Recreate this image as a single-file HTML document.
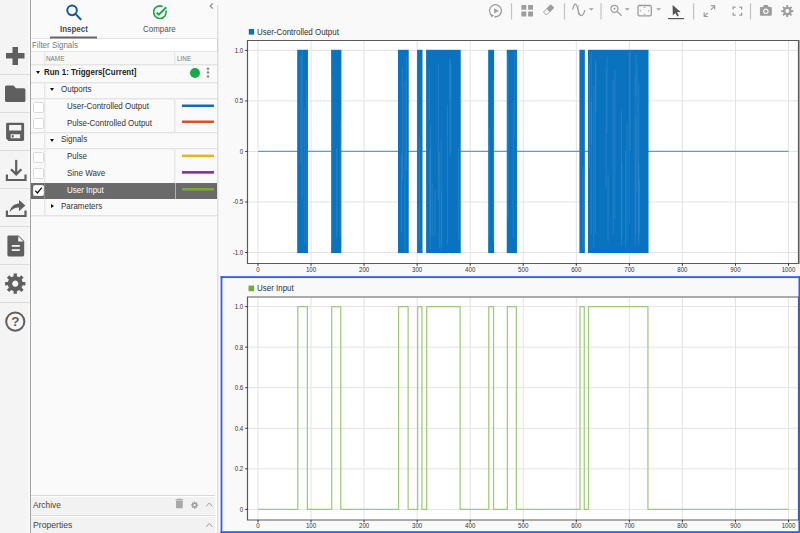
<!DOCTYPE html>
<html><head><meta charset="utf-8">
<style>
*{margin:0;padding:0;box-sizing:border-box}
html,body{width:800px;height:533px;overflow:hidden;background:#f9f9f9;font-family:"Liberation Sans",sans-serif;color:#333}
.a{position:absolute}
.t{position:absolute;white-space:nowrap;font-size:9px;line-height:9px;transform-origin:0 0;transform:scaleX(.885)}
#side{left:0;top:0;width:30px;height:533px;background:#f4f4f4;border-right:1px solid #a3a3a3;box-sizing:content-box}
.sep{left:0;width:30px;height:1px;background:#dcdcdc}
#panel{left:31px;top:0;width:187px;height:533px;background:#fafafa}
#pbr{left:217px;top:5px;width:2px;height:528px;background:#e0e0e0}
.hl{position:absolute;left:31px;width:186px;height:1px;background:#e4e4e4;box-shadow:0 1px 0 #f0f0f0}
.vl{position:absolute;width:1px;background:#e8e8e8;box-shadow:1px 0 0 #f1f1f1}
.cb{position:absolute;left:32.5px;width:11px;height:11px;background:#fff;border:1px solid #dadada;border-radius:1.5px}
.ln{position:absolute;left:182px;width:32px;height:2.4px}
.tri{position:absolute;width:0;height:0;border-left:2.5px solid transparent;border-right:2.5px solid transparent;border-top:3.5px solid #111}
</style></head><body>

<!-- left sidebar -->
<div id="side" class="a"></div><div class="a" style="left:28px;top:0;width:1.5px;height:533px;background:#f8f8f8"></div><div class="a" style="left:31px;top:0;width:1px;height:533px;background:#fff"></div>
<div class="a sep" style="top:74px"></div>
<div class="a sep" style="top:112px"></div>
<div class="a sep" style="top:150px"></div>
<div class="a sep" style="top:188px"></div>
<div class="a sep" style="top:226px"></div>
<div class="a sep" style="top:264px"></div>
<div class="a sep" style="top:302px"></div>
<svg class="a" style="left:0;top:0" width="30" height="340" viewBox="0 0 30 340">
  <g fill="#5f5f5f">
    <rect x="12.5" y="47" width="5.5" height="18"/>
    <rect x="6" y="53" width="18.5" height="5.5"/>
    <path d="M6.5 85.5 H13.5 L16 88.3 H24 Q25.4 88.3 25.4 89.8 V100.5 Q25.4 102 24 102 H6.5 Q5 102 5 100.5 V87 Q5 85.5 6.5 85.5 Z"/>
    <path d="M7.5 122.7 H22.7 Q24.1 122.7 24.1 124.1 V139.6 Q24.1 141 22.7 141 H8.5 L6.1 138.6 V124.1 Q6.1 122.7 7.5 122.7 Z M9.1 125.1 V130.6 H21.3 V125.1 Z M10.7 134.3 V138.3 H20.1 V134.3 Z"/>
    <rect x="11.7" y="135.2" width="2" height="2.2"/>
    <path d="M7.5 235.4 H18.5 L24.2 241 V255 Q24.2 256.4 22.8 256.4 H8.8 Q7.4 256.4 7.4 255 V236.8 Q7.4 235.4 8.8 235.4 Z"/>
  </g>
  <g fill="#f3f3f3">
    <path d="M18.2 236.2 L23.6 241.6 H18.2 Z"/>
    <rect x="11.8" y="245" width="8" height="1.8"/>
    <rect x="11.8" y="249.2" width="8" height="1.8"/>
  </g>
  <g fill="none" stroke="#5f5f5f" stroke-width="2.2">
    <path d="M6.9 174.6 V180 H25.5 V174.6"/>
    <path d="M16.2 159.9 V174.5"/>
    <path d="M11 169.2 L16.2 174.4 L21.4 169.2"/>
    <path d="M6.9 210.6 V216 H25.5 V210.6"/>
    <circle cx="15.25" cy="321.6" r="9.1" stroke-width="2"/>
  </g>
  <path fill="#5f5f5f" d="M9.6 212.3 C10.5 206.5 14.5 203.8 19 203.6 V200 L25.4 205.6 L19 211.2 V207.5 C14.8 207.6 11.8 209.2 9.6 212.3 Z"/>
  <text x="15.25" y="326.2" font-family="Liberation Sans" font-size="13.5" font-weight="bold" fill="#5f5f5f" text-anchor="middle">?</text>
  <path fill="#5f5f5f" fill-rule="evenodd" d="M13.65 276.27 L13.56 273.54 L16.94 273.54 L16.85 276.27 L19.37 277.32 L21.24 275.32 L23.63 277.71 L21.63 279.58 L22.68 282.10 L25.41 282.01 L25.41 285.39 L22.68 285.30 L21.63 287.82 L23.63 289.69 L21.24 292.08 L19.37 290.08 L16.85 291.13 L16.94 293.86 L13.56 293.86 L13.65 291.13 L11.13 290.08 L9.26 292.08 L6.87 289.69 L8.87 287.82 L7.82 285.30 L5.09 285.39 L5.09 282.01 L7.82 282.10 L8.87 279.58 L6.87 277.71 L9.26 275.32 L11.13 277.32 Z M15.25 280.60 A3.1 3.1 0 1 0 15.26 280.60 Z"/>
</svg>

<!-- panel -->
<div id="panel" class="a"></div><div id="pbr" class="a"></div>
<div class="hl" style="top:38px;background:#e2e2e2"></div>
<div class="a" style="left:31px;top:39px;width:186px;height:12px;background:#fff"></div>
<div class="a" style="left:31px;top:51px;width:186px;height:14px;background:#f8f8f8"></div>
<div class="hl" style="top:51px;background:#e6e6e6;box-shadow:none"></div>
<div class="a" style="left:216.5px;top:39px;width:1.5px;height:13px;background:#cfcfcf"></div>
<div class="hl" style="top:64px"></div>
<div class="hl" style="top:82px"></div>
<div class="hl" style="top:98px"></div>
<div class="hl" style="top:132px"></div>
<div class="hl" style="top:148px"></div>
<div class="hl" style="top:215px"></div>
<div class="vl" style="left:44px;top:51px;height:13px"></div>
<div class="vl" style="left:174px;top:51px;height:13px"></div>
<div class="vl" style="left:44px;top:83px;height:132px"></div>
<div class="vl" style="left:174px;top:99px;height:33px"></div>
<div class="vl" style="left:174px;top:149px;height:50px"></div>

<!-- selected row -->
<div class="a" style="left:31px;top:183px;width:186px;height:16px;background:#6a6a6a"></div>
<div class="a" style="left:44px;top:183px;width:1px;height:16px;background:#8a8a8a"></div>
<div class="a" style="left:174.5px;top:183px;width:1.5px;height:16px;background:#b0b0b0"></div>

<div class="cb" style="top:101.8px"></div>
<div class="cb" style="top:118.2px"></div>
<div class="cb" style="top:151.6px"></div>
<div class="cb" style="top:168px"></div>
<div class="cb" style="top:184.8px;border-color:#e8e8e8"></div>

<svg class="a" style="left:180px;top:100px" width="36" height="95" viewBox="180 100 36 95">
<rect x="182" y="104.5" width="32" height="2.5" fill="#0a6ebd"/>
<rect x="182" y="120.5" width="32" height="2.5" fill="#d95319"/>
<rect x="182" y="154.6" width="32" height="2.5" fill="#edb120"/>
<rect x="182" y="171.1" width="32" height="2.5" fill="#7e2f8e"/>
<rect x="182" y="188" width="32" height="2.5" fill="#77ac30"/>
</svg>


<!-- tabs -->
<svg class="a" style="left:31px;top:0" width="187" height="40" viewBox="31 0 187 40">
  <g fill="none" stroke="#0e5a96" stroke-width="2" transform="translate(0.4 0.6)">
    <circle cx="71.65" cy="9.75" r="4.8"/>
    <path d="M75.1 13.3 L80.2 18.6" stroke-linecap="round"/>
  </g>
  <g fill="none" stroke="#15a84a" stroke-width="1.6">
    <path d="M165.99 10.57 A6.3 6.3 0 1 1 162.56 6.49"/>
    <path d="M156.6 12.5 L158.8 14.6 L166.3 7.3" stroke-width="1.9"/>
  </g>
  <path d="M212.8 3.4 L210.2 6 L212.8 8.6" fill="none" stroke="#8f8f8f" stroke-width="1.3"/>
  <rect x="50" y="36.5" width="47" height="2" fill="#666"/>
</svg>
<div class="t" style="left:59.5px;top:25px;font-weight:bold;color:#4a4a4a">Inspect</div>
<div class="t" style="left:143.3px;top:25px;color:#555">Compare</div>
<div class="t" style="left:31.5px;top:40.5px;color:#777">Filter Signals</div>
<div class="t" style="left:46px;top:53.6px;font-size:7.2px;color:#777">NAME</div>
<div class="t" style="left:176.8px;top:53.6px;font-size:7.2px;color:#777">LINE</div>

<div class="tri" style="left:36px;top:71px"></div>
<div class="t" style="left:43.5px;top:67.5px;font-weight:bold;color:#222">Run 1: Triggers[Current]</div>
<div class="a" style="left:190.3px;top:67.8px;width:10px;height:10px;border-radius:50%;background:#17a84a"></div>
<svg class="a" style="left:204px;top:64px" width="8" height="16" viewBox="204 64 8 16"><g fill="#8a8a8a"><circle cx="208" cy="68.7" r="1.25"/><circle cx="208" cy="72.6" r="1.25"/><circle cx="208" cy="76.6" r="1.25"/></g></svg>

<div class="tri" style="left:50px;top:88px"></div>
<div class="t" style="left:60.75px;top:84.5px;color:#333">Outports</div>
<div class="t" style="left:66.75px;top:101.5px;color:#333">User-Controlled Output</div>
<div class="t" style="left:66.75px;top:119px;color:#333">Pulse-Controlled Output</div>
<div class="tri" style="left:50px;top:139px"></div>
<div class="t" style="left:60.75px;top:135px;color:#333">Signals</div>
<div class="t" style="left:66.75px;top:152px;color:#333">Pulse</div>
<div class="t" style="left:66.75px;top:168.5px;color:#333">Sine Wave</div>
<div class="t" style="left:66.75px;top:185.5px;color:#fff">User Input</div>
<div class="a" style="left:51px;top:204px;width:0;height:0;border-top:2.8px solid transparent;border-bottom:2.8px solid transparent;border-left:3.8px solid #111"></div>
<div class="t" style="left:60.75px;top:202px;color:#333">Parameters</div>
<svg class="a" style="left:33px;top:185px" width="11" height="11" viewBox="0 0 11 11"><path d="M2.3 5.6 L4.4 7.9 L8.8 2.6" fill="none" stroke="#111" stroke-width="1.3"/></svg>

<!-- archive / properties -->
<div class="a" style="left:31px;top:495.5px;width:184px;height:19px;background:#f2f2f2"></div>
<div class="a" style="left:31px;top:515.5px;width:184px;height:18px;background:#f2f2f2"></div>
<div class="hl" style="top:495px;background:#d9d9d9;width:184px;box-shadow:0 1px 0 #fff"></div>
<div class="hl" style="top:515px;background:#d9d9d9;width:184px;box-shadow:0 1px 0 #fff,0 -1px 0 #f7f7f7"></div>
<div class="t" style="left:33px;top:501px;color:#444;transform:scaleX(.93)">Archive</div>
<div class="t" style="left:33px;top:521px;color:#444;transform:scaleX(.96)">Properties</div>
<svg class="a" style="left:170px;top:495px" width="48" height="38" viewBox="170 495 48 38">
  <g fill="#a8a8a8">
    <rect x="176" y="500.6" width="6.8" height="7.6" rx="0.8"/>
    <rect x="175.6" y="499.2" width="7.6" height="1" />
    <rect x="177.8" y="498.6" width="3.2" height="1"/>
  </g>
  <path fill="#9a9a9a" fill-rule="evenodd" d="M194.04 502.56 L193.97 501.56 L195.23 501.56 L195.16 502.56 L196.00 502.91 L196.66 502.15 L197.55 503.04 L196.79 503.70 L197.14 504.54 L198.14 504.47 L198.14 505.73 L197.14 505.66 L196.79 506.50 L197.55 507.16 L196.66 508.05 L196.00 507.29 L195.16 507.64 L195.23 508.64 L193.97 508.64 L194.04 507.64 L193.20 507.29 L192.54 508.05 L191.65 507.16 L192.41 506.50 L192.06 505.66 L191.06 505.73 L191.06 504.47 L192.06 504.54 L192.41 503.70 L191.65 503.04 L192.54 502.15 L193.20 502.91 Z M194.60 503.90 A1.2 1.2 0 1 0 194.61 503.90 Z"/>
  <g fill="none" stroke="#9a9a9a" stroke-width="1">
    <path d="M206.2 506.3 L209.3 503 L212.4 506.3"/>
    <path d="M206.2 526.8 L209.3 523.5 L212.4 526.8"/>
  </g>
</svg>
<!-- PLOT -->
<svg class="a" style="left:218px;top:0" width="582" height="533" viewBox="218 0 582 533" font-family="Liberation Sans">
<rect x="218.5" y="0" width="582" height="533" fill="#f9f9f9"/>
<rect x="247.5" y="40.5" width="551" height="222.5" fill="#fff"/>
<rect x="247.5" y="297" width="551" height="223" fill="#fff"/>
<path d="M258.00 41V263 M258.00 297.5V520 M311.05 41V263 M311.05 297.5V520 M364.10 41V263 M364.10 297.5V520 M417.15 41V263 M417.15 297.5V520 M470.20 41V263 M470.20 297.5V520 M523.25 41V263 M523.25 297.5V520 M576.30 41V263 M576.30 297.5V520 M629.35 41V263 M629.35 297.5V520 M682.40 41V263 M682.40 297.5V520 M735.45 41V263 M735.45 297.5V520 M788.50 41V263 M788.50 297.5V520 M248 50.40H798 M248 100.92H798 M248 151.45H798 M248 201.97H798 M248 252.50H798 M248 306.60H798 M248 347.16H798 M248 387.72H798 M248 428.28H798 M248 468.84H798 M248 509.40H798" stroke="#e3e3e3" stroke-width="1" fill="none"/>
<path d="M258.00 151.45H788.50" stroke="#5e9bd0" stroke-width="1.3" fill="none"/>
<rect x="297.19" y="49.80" width="10.75" height="203.30" fill="#0a73c0"/>
<path d="M302.09 51.23V198.70" stroke="#4a95d3" stroke-width="0.7" opacity="0.55"/>
<path d="M304.22 108.86V243.05" stroke="#4a95d3" stroke-width="0.7" opacity="0.55"/>
<path d="M306.21 79.96V245.59" stroke="#4a95d3" stroke-width="0.7" opacity="0.55"/>
<path d="M300.81 55.42V164.94" stroke="#4a95d3" stroke-width="0.7" opacity="0.55"/>
<rect x="331.14" y="49.80" width="10.22" height="203.30" fill="#0a73c0"/>
<path d="M331.75 76.96V241.72" stroke="#4a95d3" stroke-width="0.7" opacity="0.55"/>
<path d="M340.22 120.92V237.52" stroke="#4a95d3" stroke-width="0.7" opacity="0.55"/>
<path d="M336.48 148.35V237.32" stroke="#4a95d3" stroke-width="0.7" opacity="0.55"/>
<rect x="397.98" y="49.80" width="10.75" height="203.30" fill="#0a73c0"/>
<path d="M406.31 56.68V169.89" stroke="#4a95d3" stroke-width="0.7" opacity="0.55"/>
<path d="M401.58 153.29V232.55" stroke="#4a95d3" stroke-width="0.7" opacity="0.55"/>
<path d="M404.92 81.87V251.61" stroke="#4a95d3" stroke-width="0.7" opacity="0.55"/>
<path d="M402.47 67.38V180.43" stroke="#4a95d3" stroke-width="0.7" opacity="0.55"/>
<rect x="417.08" y="49.80" width="5.44" height="203.30" fill="#0a73c0"/>
<path d="M419.37 138.37V242.63" stroke="#4a95d3" stroke-width="0.7" opacity="0.55"/>
<rect x="426.10" y="49.80" width="34.62" height="203.30" fill="#0a73c0"/>
<path d="M450.05 58.41V157.19" stroke="#4a95d3" stroke-width="0.7" opacity="0.55"/>
<path d="M447.49 105.17V244.13" stroke="#4a95d3" stroke-width="0.7" opacity="0.55"/>
<path d="M439.26 151.37V248.62" stroke="#4a95d3" stroke-width="0.7" opacity="0.55"/>
<path d="M432.21 183.19V235.94" stroke="#4a95d3" stroke-width="0.7" opacity="0.55"/>
<path d="M449.95 59.55V99.64" stroke="#4a95d3" stroke-width="0.7" opacity="0.55"/>
<path d="M441.20 140.05V250.99" stroke="#4a95d3" stroke-width="0.7" opacity="0.55"/>
<path d="M438.29 63.97V199.36" stroke="#4a95d3" stroke-width="0.7" opacity="0.55"/>
<path d="M434.97 190.18V235.40" stroke="#4a95d3" stroke-width="0.7" opacity="0.55"/>
<path d="M429.21 68.13V120.30" stroke="#4a95d3" stroke-width="0.7" opacity="0.55"/>
<path d="M450.88 63.95V151.40" stroke="#4a95d3" stroke-width="0.7" opacity="0.55"/>
<path d="M430.50 123.54V237.11" stroke="#4a95d3" stroke-width="0.7" opacity="0.55"/>
<path d="M458.39 147.32V239.02" stroke="#4a95d3" stroke-width="0.7" opacity="0.55"/>
<path d="M430.09 148.48V249.31" stroke="#4a95d3" stroke-width="0.7" opacity="0.55"/>
<path d="M441.62 191.02V244.87" stroke="#4a95d3" stroke-width="0.7" opacity="0.55"/>
<rect x="488.17" y="49.80" width="5.97" height="203.30" fill="#0a73c0"/>
<path d="M493.47 80.54V242.17" stroke="#4a95d3" stroke-width="0.7" opacity="0.55"/>
<path d="M489.02 126.98V234.57" stroke="#4a95d3" stroke-width="0.7" opacity="0.55"/>
<rect x="506.73" y="49.80" width="10.22" height="203.30" fill="#0a73c0"/>
<path d="M507.71 53.04V218.93" stroke="#4a95d3" stroke-width="0.7" opacity="0.55"/>
<path d="M513.22 101.29V238.33" stroke="#4a95d3" stroke-width="0.7" opacity="0.55"/>
<path d="M514.69 51.37V138.61" stroke="#4a95d3" stroke-width="0.7" opacity="0.55"/>
<rect x="579.41" y="49.80" width="5.44" height="203.30" fill="#0a73c0"/>
<path d="M582.97 166.39V250.29" stroke="#4a95d3" stroke-width="0.7" opacity="0.55"/>
<rect x="587.90" y="49.80" width="60.62" height="203.30" fill="#0a73c0"/>
<path d="M591.19 51.65V144.34" stroke="#4a95d3" stroke-width="0.7" opacity="0.55"/>
<path d="M591.29 101.73V234.16" stroke="#4a95d3" stroke-width="0.7" opacity="0.55"/>
<path d="M639.37 178.94V233.67" stroke="#4a95d3" stroke-width="0.7" opacity="0.55"/>
<path d="M606.11 67.37V187.49" stroke="#4a95d3" stroke-width="0.7" opacity="0.55"/>
<path d="M626.99 123.73V240.36" stroke="#4a95d3" stroke-width="0.7" opacity="0.55"/>
<path d="M629.20 51.87V222.79" stroke="#4a95d3" stroke-width="0.7" opacity="0.55"/>
<path d="M635.89 54.72V97.05" stroke="#4a95d3" stroke-width="0.7" opacity="0.55"/>
<path d="M589.48 62.73V169.10" stroke="#4a95d3" stroke-width="0.7" opacity="0.55"/>
<path d="M595.40 59.70V233.61" stroke="#4a95d3" stroke-width="0.7" opacity="0.55"/>
<path d="M621.36 109.47V246.29" stroke="#4a95d3" stroke-width="0.7" opacity="0.55"/>
<path d="M608.12 174.54V241.82" stroke="#4a95d3" stroke-width="0.7" opacity="0.55"/>
<path d="M630.26 50.64V150.08" stroke="#4a95d3" stroke-width="0.7" opacity="0.55"/>
<path d="M638.68 164.14V240.32" stroke="#4a95d3" stroke-width="0.7" opacity="0.55"/>
<path d="M613.26 80.93V234.16" stroke="#4a95d3" stroke-width="0.7" opacity="0.55"/>
<path d="M614.90 70.12V218.25" stroke="#4a95d3" stroke-width="0.7" opacity="0.55"/>
<path d="M595.95 63.27V112.21" stroke="#4a95d3" stroke-width="0.7" opacity="0.55"/>
<path d="M638.74 83.83V245.62" stroke="#4a95d3" stroke-width="0.7" opacity="0.55"/>
<path d="M625.47 150.25V247.26" stroke="#4a95d3" stroke-width="0.7" opacity="0.55"/>
<path d="M635.79 118.12V234.34" stroke="#4a95d3" stroke-width="0.7" opacity="0.55"/>
<path d="M607.08 57.02V133.36" stroke="#4a95d3" stroke-width="0.7" opacity="0.55"/>
<path d="M637.10 63.31V191.83" stroke="#4a95d3" stroke-width="0.7" opacity="0.55"/>
<path d="M621.66 162.61V237.74" stroke="#4a95d3" stroke-width="0.7" opacity="0.55"/>
<path d="M593.74 85.76V247.21" stroke="#4a95d3" stroke-width="0.7" opacity="0.55"/>
<path d="M635.16 75.17V245.58" stroke="#4a95d3" stroke-width="0.7" opacity="0.55"/>
<path d="M258.00 509.40H297.79V306.60H307.34V509.40H331.74V306.60H340.76V509.40H398.58V306.60H408.13V509.40H417.68V306.60H421.92V509.40H426.70V306.60H460.12V509.40H488.77V306.60H493.54V509.40H507.33V306.60H516.35V509.40H580.01V306.60H584.26V509.40H588.50V306.60H647.92V509.40H788.50" stroke="#a0ca7a" stroke-width="1.25" fill="none" stroke-linejoin="round"/>
<path d="M247.5 40.5V263.5H798.5V40.5Z" fill="none" stroke="#5a5a5a" stroke-width="1.2"/>
<rect x="799" y="40" width="1" height="224" fill="#a8a8a8"/>
<path d="M247.5 297V520H798.5V297Z" fill="none" stroke="#5a5a5a" stroke-width="1.2"/>
<path d="M258.00 263.5V265.8 M258.00 520V522.3 M311.05 263.5V265.8 M311.05 520V522.3 M364.10 263.5V265.8 M364.10 520V522.3 M417.15 263.5V265.8 M417.15 520V522.3 M470.20 263.5V265.8 M470.20 520V522.3 M523.25 263.5V265.8 M523.25 520V522.3 M576.30 263.5V265.8 M576.30 520V522.3 M629.35 263.5V265.8 M629.35 520V522.3 M682.40 263.5V265.8 M682.40 520V522.3 M735.45 263.5V265.8 M735.45 520V522.3 M788.50 263.5V265.8 M788.50 520V522.3 M245.2 50.40H247.5 M245.2 100.92H247.5 M245.2 151.45H247.5 M245.2 201.97H247.5 M245.2 252.50H247.5 M245.2 306.60H247.5 M245.2 347.16H247.5 M245.2 387.72H247.5 M245.2 428.28H247.5 M245.2 468.84H247.5 M245.2 509.40H247.5" stroke="#333" stroke-width="1" fill="none"/>
<g font-size="7" fill="#333" transform="scale(0.88 1)"><text x="293.18" y="271.8" text-anchor="middle">0</text><text x="293.18" y="528.3" text-anchor="middle">0</text><text x="353.47" y="271.8" text-anchor="middle">100</text><text x="353.47" y="528.3" text-anchor="middle">100</text><text x="413.75" y="271.8" text-anchor="middle">200</text><text x="413.75" y="528.3" text-anchor="middle">200</text><text x="474.03" y="271.8" text-anchor="middle">300</text><text x="474.03" y="528.3" text-anchor="middle">300</text><text x="534.32" y="271.8" text-anchor="middle">400</text><text x="534.32" y="528.3" text-anchor="middle">400</text><text x="594.60" y="271.8" text-anchor="middle">500</text><text x="594.60" y="528.3" text-anchor="middle">500</text><text x="654.89" y="271.8" text-anchor="middle">600</text><text x="654.89" y="528.3" text-anchor="middle">600</text><text x="715.17" y="271.8" text-anchor="middle">700</text><text x="715.17" y="528.3" text-anchor="middle">700</text><text x="775.45" y="271.8" text-anchor="middle">800</text><text x="775.45" y="528.3" text-anchor="middle">800</text><text x="835.74" y="271.8" text-anchor="middle">900</text><text x="835.74" y="528.3" text-anchor="middle">900</text><text x="896.02" y="271.8" text-anchor="middle">1000</text><text x="896.02" y="528.3" text-anchor="middle">1000</text><text x="276.48" y="52.90" text-anchor="end">1.0</text><text x="276.48" y="103.42" text-anchor="end">0.5</text><text x="276.48" y="153.95" text-anchor="end">0</text><text x="276.48" y="204.47" text-anchor="end">-0.5</text><text x="276.48" y="255.00" text-anchor="end">-1.0</text><text x="276.48" y="309.10" text-anchor="end">1.0</text><text x="276.48" y="349.66" text-anchor="end">0.8</text><text x="276.48" y="390.22" text-anchor="end">0.6</text><text x="276.48" y="430.78" text-anchor="end">0.4</text><text x="276.48" y="471.34" text-anchor="end">0.2</text><text x="276.48" y="511.90" text-anchor="end">0</text></g>
<rect x="248.8" y="29" width="5.3" height="5.6" fill="#0a6fbd"/>
<rect x="248.5" y="285.6" width="5.6" height="5.6" fill="#77ac30"/>
<g fill="#2d5cfa"><rect x="220.6" y="276.2" width="1.75" height="256.8"/><rect x="220.6" y="276.2" width="579.4" height="1.85"/><rect x="798.5" y="276.2" width="1.5" height="256.8"/><rect x="220.6" y="531.2" width="579.4" height="1.8"/></g>
</svg>
<div class="t" style="left:256.6px;top:27.5px;color:#333">User-Controlled Output</div>
<div class="t" style="left:256.6px;top:284.2px;color:#333">User Input</div>
<!-- /PLOT -->
<!-- TB -->
<svg class="a" style="left:480px;top:0" width="320" height="24" viewBox="480 0 320 24">
<rect x="510.90" y="3.2" width="1.2" height="16.3" fill="#c4c4c4"/>
<rect x="563.90" y="3.2" width="1.2" height="16.3" fill="#c4c4c4"/>
<rect x="600.40" y="3.2" width="1.2" height="16.3" fill="#c4c4c4"/>
<rect x="693.00" y="3.2" width="1.2" height="16.3" fill="#c4c4c4"/>
<rect x="749.90" y="3.2" width="1.2" height="16.3" fill="#c4c4c4"/>
<path d="M491.6 15.3 A6 6 0 1 1 494.3 16.6" fill="none" stroke="#9d9d9d" stroke-width="1.3"/>
<path d="M490.2 13.6 L491.2 17.2 L494.2 15.6 Z" fill="#9d9d9d"/>
<path d="M494.2 8.2 L498.9 10.9 L494.2 13.6 Z" fill="#9d9d9d"/>
<rect x="521.4" y="5" width="4.9" height="4.8" rx="0.5" fill="#9d9d9d"/>
<rect x="528.1" y="5" width="4.9" height="4.8" rx="0.5" fill="#9d9d9d"/>
<rect x="521.4" y="11.6" width="4.9" height="4.8" rx="0.5" fill="#9d9d9d"/>
<rect x="528.1" y="11.6" width="4.9" height="4.8" rx="0.5" fill="#9d9d9d"/>
<g transform="translate(548.6 9.9) rotate(-45)"><rect x="-0.3" y="-2.55" width="5.8" height="5.1" fill="#9d9d9d"/><rect x="-5.1" y="-2.1" width="4.8" height="4.2" fill="none" stroke="#9d9d9d" stroke-width="0.9"/></g>
<path d="M572.6 9.6 C573.6 5.5 574.5 4.2 575.4 4.2 C576.8 4.2 577.6 8 578.5 12 C579.4 15.5 580.4 15.6 581.4 15.6 C582.8 15.6 584 13.4 584.8 10.2" fill="none" stroke="#9d9d9d" stroke-width="1.2"/>
<path d="M578.3 4.8 V15" fill="none" stroke="#9d9d9d" stroke-width="0.8" opacity="0.7"/>
<path d="M588.8 8.2 H593.8 L591.3 10.6 Z" fill="#9d9d9d"/>
<path d="M624.8 8.2 H629.8 L627.3 10.6 Z" fill="#9d9d9d"/>
<path d="M656.1 8.2 H661.1 L658.6 10.6 Z" fill="#9d9d9d"/>
<circle cx="614.5" cy="8.8" r="3.5" fill="none" stroke="#9d9d9d" stroke-width="1.3"/>
<circle cx="614.5" cy="8.8" r="1" fill="#9d9d9d"/>
<path d="M617.2 11.6 L621.6 15.8" stroke="#9d9d9d" stroke-width="1.3"/>
<rect x="638" y="5.5" width="13.3" height="10.3" rx="1.4" fill="none" stroke="#9d9d9d" stroke-width="1.3"/>
<path d="M643.8 7.5 L644.6 6.7 L645.4 7.5 Z M643.8 14 L644.6 14.8 L645.4 14 Z M640.6 10 L639.8 10.7 L640.6 11.4 Z M648.6 10 L649.4 10.7 L648.6 11.4 Z" fill="#9d9d9d" stroke="#9d9d9d" stroke-width="0.4"/>
<path d="M672.6 4.9 L680.6 12.1 L677 12.3 L678.9 15.6 L677.3 16.4 L675.4 13.1 L672.8 15.4 Z" fill="#555"/>
<rect x="668.1" y="18" width="16" height="1.2" fill="#555"/>
<g fill="none" stroke="#9d9d9d" stroke-width="1.2"><path d="M704.3 16.4 L707.8 12.9 M710.8 9.9 L714.5 6.2"/><path d="M704.2 12.6 V16.5 H708.1 M710.8 5.6 H714.6 V9.5"/></g>
<path d="M733.2 9.6 V7.1 H735.7 M739.3 7.1 H741.6 V9.6 M741.6 12.7 V15.1 H739.3 M735.7 15.1 H733.2 V12.7" fill="none" stroke="#9d9d9d" stroke-width="1.3"/>
<path fill-rule="evenodd" fill="#9d9d9d" d="M760.8 6.9 H763 L763.9 5.1 H767.8 L768.7 6.9 H770.9 Q771.8 6.9 771.8 7.8 V14.8 Q771.8 15.7 770.9 15.7 H760.8 Q759.9 15.7 759.9 14.8 V7.8 Q759.9 6.9 760.8 6.9 Z M765.85 8.5 A2.8 2.8 0 1 0 765.86 8.5 Z"/>
<circle cx="765.85" cy="11.3" r="1.5" fill="#9d9d9d"/>
<path fill-rule="evenodd" fill="#9d9d9d" d="M786.37 6.80 L786.30 5.08 L788.30 5.08 L788.23 6.80 L789.69 7.40 L790.85 6.14 L792.26 7.55 L791.00 8.71 L791.60 10.17 L793.32 10.10 L793.32 12.10 L791.60 12.03 L791.00 13.49 L792.26 14.65 L790.85 16.06 L789.69 14.80 L788.23 15.40 L788.30 17.12 L786.30 17.12 L786.37 15.40 L784.91 14.80 L783.75 16.06 L782.34 14.65 L783.60 13.49 L783.00 12.03 L781.28 12.10 L781.28 10.10 L783.00 10.17 L783.60 8.71 L782.34 7.55 L783.75 6.14 L784.91 7.40 Z M787.30 9.10 A2.0 2.0 0 1 0 787.31 9.10 Z"/>
</svg>
<!-- /TB -->
</body></html>
